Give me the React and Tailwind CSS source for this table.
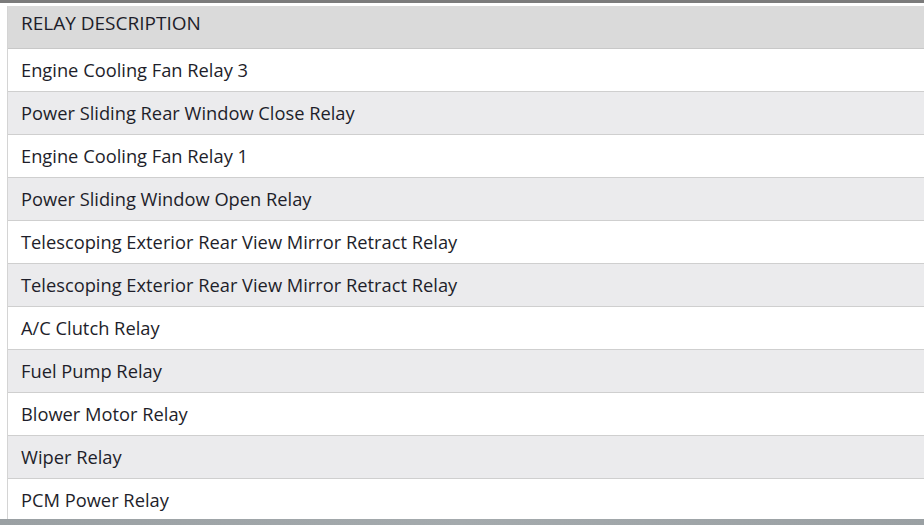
const rows = [
  "Engine Cooling Fan Relay 3",
  "Power Sliding Rear Window Close Relay",
  "Engine Cooling Fan Relay 1",
  "Power Sliding Window Open Relay",
  "Telescoping Exterior Rear View Mirror Retract Relay",
  "Telescoping Exterior Rear View Mirror Retract Relay",
  "A/C Clutch Relay",
  "Fuel Pump Relay",
  "Blower Motor Relay",
  "Wiper Relay",
  "PCM Power Relay",
];

const App = () => {
  return (
    <div className="w-[924px] h-[525px] overflow-hidden bg-white flex flex-col font-['Open_Sans',sans-serif] text-[#1e1e2a]">
      <div className="h-[3px] bg-[#7b7b7b] shrink-0" />
      <div className="flex-1 min-h-0 pt-[3px] pl-[7px] overflow-hidden">
        <div className="border-l border-[#d4d4d4] h-full">
          <table className="w-full border-collapse text-[18.3px]">
            <thead>
              <tr className="bg-[#dadada] border-b border-[#c8c8c8]">
                <th className="h-[42px] px-[13px] pb-[8px] text-left font-normal text-[19px]">RELAY DESCRIPTION</th>
              </tr>
            </thead>
            <tbody>
              {rows.map((r, i) => (
                <tr
                  key={i}
                  className={`border-b border-[#cfcfcf] ${i % 2 === 0 ? "bg-white" : "bg-[#ebebed]"}`}
                >
                  <td className="h-[43px] px-[13px] pt-[1px]">{r}</td>
                </tr>
              ))}
            </tbody>
          </table>
        </div>
      </div>
      <div className="h-[6px] shrink-0 bg-gradient-to-r from-[#9aa0a3] via-[#a4aaad] to-[#9aa0a3]" />
    </div>
  );
};

export default App;
